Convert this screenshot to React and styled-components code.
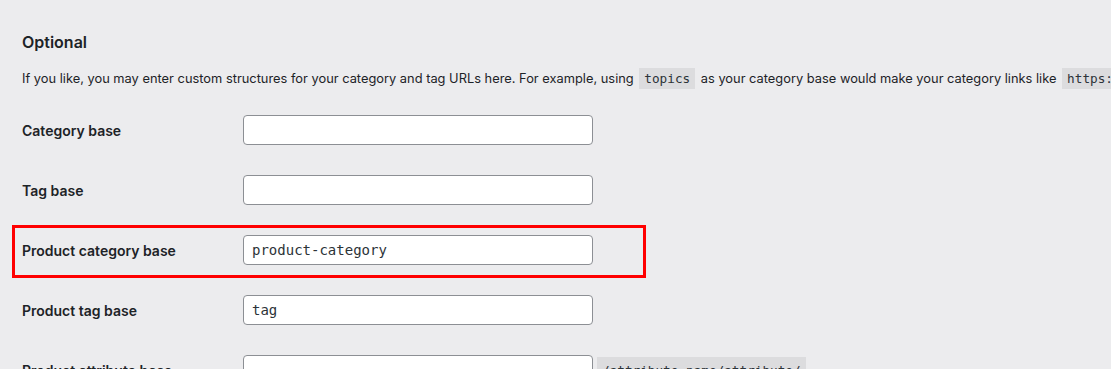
import styled, { createGlobalStyle } from 'styled-components';

const GlobalStyle = createGlobalStyle`
  html, body {
    margin: 0;
    padding: 0;
    background: #ececee;
  }
  body {
    font-family: 'Inter', 'Liberation Sans', sans-serif;
    color: #1d2327;
    overflow: hidden;
  }
`;

const rows = [
  { label: 'Category base', value: '' },
  { label: 'Tag base', value: '' },
  { label: 'Product category base', value: 'product-category', highlight: true },
  { label: 'Product tag base', value: 'tag' },
  { label: 'Product attribute base', value: '', suffix: '/attribute-name/attribute/' },
];

const App = () => {
  return (
    <>
      <GlobalStyle />
      <Page>
        <Heading>Optional</Heading>
        <Description>
          If you like, you may enter custom structures for your category and tag URLs here. For example, using{' '}
          <Code>topics</Code> as your category base would make your category links like{' '}
          <Code>https://example.com/topics/uncategorized/</Code>
        </Description>
        <FormTable>
          {rows.map((row) => (
            <Row key={row.label} $highlight={row.highlight}>
              <Label>{row.label}</Label>
              <Field>
                <Input defaultValue={row.value} />
                {row.suffix && <Suffix>{row.suffix}</Suffix>}
              </Field>
            </Row>
          ))}
        </FormTable>
      </Page>
    </>
  );
};

export default App;

const Page = styled.div`
  padding: 30px 0 0 22px;
  width: 1300px;
`;

const Heading = styled.h2`
  margin: 0;
  font-size: 16px;
  font-weight: 600;
  line-height: 24px;
  color: #1d2327;
`;

const Description = styled.p`
  margin: 14px 0 0;
  font-size: 12.85px;
  line-height: 22px;
  white-space: nowrap;
  color: #1d2327;
`;

const Code = styled.code`
  font-family: 'DejaVu Sans Mono', monospace;
  font-size: 12.7px;
  background: #dcdcde;
  padding: 3px 5px;
  margin: 0 2px;
  color: #2c3338;
`;

const Suffix = styled(Code)`
  display: block;
  margin: 2px 0 0;
  padding-top: 6px;
  line-height: 16px;
`;

const FormTable = styled.div`
  display: flex;
  flex-direction: column;
  margin-top: 10px;
`;

const Row = styled.div`
  display: flex;
  align-items: center;
  height: 60px;
  position: relative;
  &::before {
    content: '';
    display: ${(props) => (props.$highlight ? 'block' : 'none')};
    position: absolute;
    left: -10px;
    top: 5px;
    width: 634px;
    height: 53px;
    border: 3px solid #ff0000;
    box-sizing: border-box;
  }
`;

const Label = styled.div`
  width: 221px;
  font-size: 14px;
  font-weight: 600;
  color: #1d2327;
`;

const Field = styled.div`
  display: flex;
  align-items: flex-start;
  gap: 4px;
`;

const Input = styled.input`
  box-sizing: border-box;
  width: 350px;
  height: 30px;
  padding: 0 8px;
  border: 1px solid #8c8f94;
  border-radius: 4px;
  background: #fff;
  font-family: 'DejaVu Sans Mono', monospace;
  font-size: 14px;
  color: #2c3338;
  outline: none;
`;
